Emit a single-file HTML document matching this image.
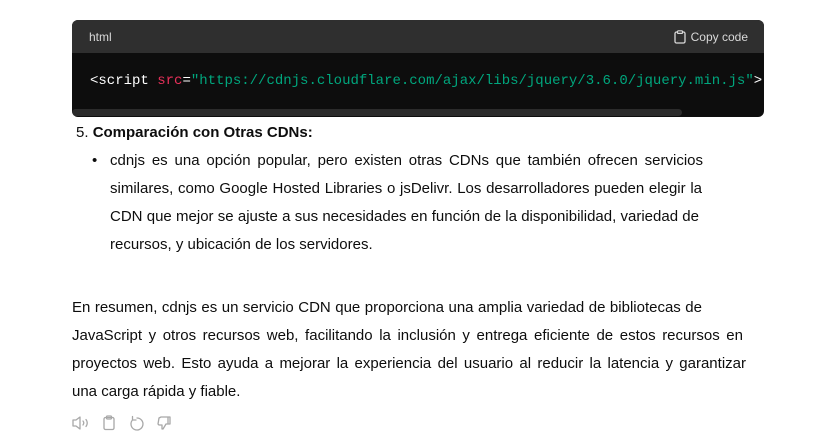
<!DOCTYPE html>
<html><head><meta charset="utf-8"><style>
body{margin:0;width:840px;height:444px;background:#fff;font-family:"Liberation Sans",sans-serif;color:#0d0d0d;overflow:hidden;position:relative}
.cb{position:absolute;left:72px;top:20px;width:692px;height:97px;border-radius:6px;overflow:hidden;background:#0d0d0d}
.hd{height:33px;background:#2f2f2f;color:#d9d9d9;font-size:12px;display:flex;align-items:center;justify-content:space-between;padding:0 16px 0 17px}
.code{position:absolute;left:18px;top:53px;font-family:"Liberation Mono",monospace;font-size:14px;color:#fff;white-space:pre}
.sb{position:absolute;left:0;top:89px;width:610px;height:7px;background:#2b2b2b;border-radius:4px}
.t{position:absolute;font-size:15px;line-height:28px;white-space:nowrap}
.l{display:block;text-align:justify;text-align-last:justify;white-space:nowrap;height:28px}
.n{display:block;height:28px}
</style></head><body>
<div class="cb"><div class="hd"><span>html</span><span style="display:flex;align-items:center;gap:5px"><svg width="12" height="14" viewBox="0 0 12 14"><rect x="1" y="2" width="10" height="11" rx="1.5" fill="none" stroke="#d9d9d9" stroke-width="1.3"/><rect x="3.5" y="0.8" width="5" height="2.6" rx="0.8" fill="#2f2f2f" stroke="#d9d9d9" stroke-width="1.2"/></svg>Copy code</span></div>
<div class="code">&lt;script <span style="color:#e8305a">src</span>=<span style="color:#00a67d">"https://cdnjs.cloudflare.com/ajax/libs/jquery/3.6.0/jquery.min.js"</span>&gt;</div>
<div class="sb"></div></div>
<div class="t" style="left:76px;top:119px"><span>5. </span><b>Comparación con Otras CDNs:</b></div>
<div class="t" style="left:92px;top:147px">•</div>
<div class="t" style="left:110px;top:147px">
<span class="l" style="width:593px">cdnjs es una opción popular, pero existen otras CDNs que también ofrecen servicios</span>
<span class="l" style="width:592px">similares, como Google Hosted Libraries o jsDelivr. Los desarrolladores pueden elegir la</span>
<span class="l" style="width:589px">CDN que mejor se ajuste a sus necesidades en función de la disponibilidad, variedad de</span>
<span class="n">recursos, y ubicación de los servidores.</span></div>
<div class="t" style="left:72px;top:294px">
<span class="l" style="width:630px">En resumen, cdnjs es un servicio CDN que proporciona una amplia variedad de bibliotecas de</span>
<span class="l" style="width:671px">JavaScript y otros recursos web, facilitando la inclusión y entrega eficiente de estos recursos en</span>
<span class="l" style="width:674px">proyectos web. Esto ayuda a mejorar la experiencia del usuario al reducir la latencia y garantizar</span>
<span class="n">una carga rápida y fiable.</span></div>
<svg style="position:absolute;left:72px;top:414px" width="110" height="18" viewBox="0 0 110 18" fill="none" stroke="#a8a8a8" stroke-width="1.3" stroke-linecap="round" stroke-linejoin="round">
<path d="M1 6h3l4-3v12l-4-3H1z M11 7q1.5 2 0 4 M14 5.5q2.5 3.5 0 7"/>
<rect x="32" y="3.5" width="10" height="12" rx="1.5"/><rect x="34.5" y="2" width="5" height="3" rx="1"/>
<path d="M65 4a6 6 0 1 1-4.5 2 M60.5 2.5v3.5h3.5"/>
<path d="M89 3h7v7h-2l-3 5h-1v-4h-3l-1-1 1-6z M96 3h2v7h-2"/>
</svg>
</body></html>
